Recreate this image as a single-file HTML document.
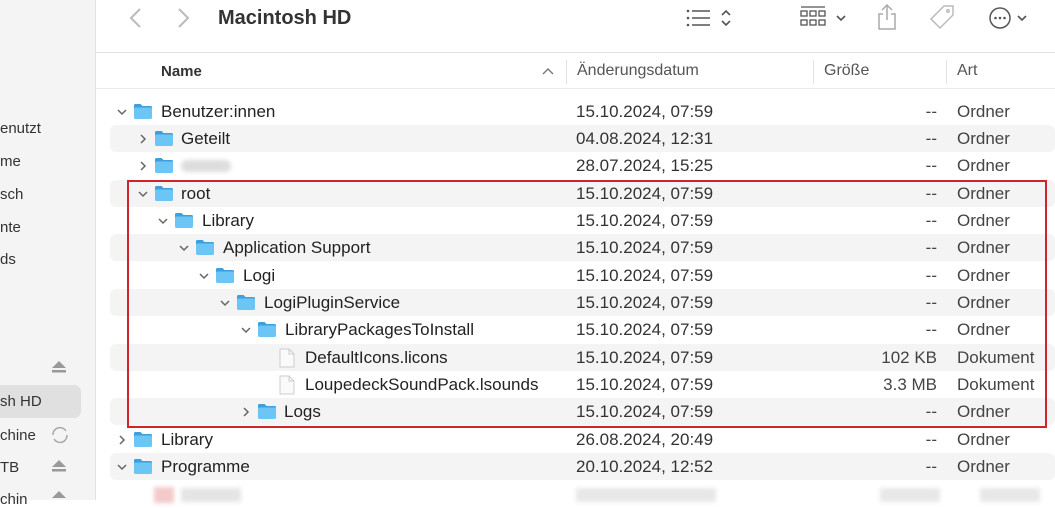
<!DOCTYPE html>
<html><head><meta charset="utf-8"><style>
*{margin:0;padding:0;box-sizing:border-box}
body{width:1055px;height:500px;overflow:hidden;background:#fff;font-family:"Liberation Sans",sans-serif;position:relative;color:#222}
.sb{position:absolute;left:0;top:0;width:96px;height:500px;background:#f4f4f4;border-right:1px solid #e2e2e2}
.sbt{position:absolute;font-size:15px;color:#333}
.a{position:absolute}
.row{position:absolute;left:110px;width:945px;height:27px;font-size:17px}
.st{background:#f4f4f4;border-radius:6px}
.row span{position:absolute;top:4px;white-space:nowrap}
.dt{left:466px;color:#333}
.row span.sz{right:118px;color:#444}
.kd{left:847px;color:#444}
.ch{position:absolute;top:8px}
.fo{position:absolute;top:5px}
.hd{position:absolute;top:62px;font-size:16px;color:#555}
</style></head><body>
<div class="sb">
<div class="sbt" style="left:0;top:120px">enutzt</div>
<div class="sbt" style="left:0;top:153px">me</div>
<div class="sbt" style="left:0;top:186px">sch</div>
<div class="sbt" style="left:0;top:219px">nte</div>
<div class="sbt" style="left:0;top:251px">ds</div>
<svg class="a" style="left:51px;top:360px" width="16" height="14"><path d="M8 1 L15 8 H1 Z" fill="#999"/><rect x="1" y="10" width="14" height="2.5" fill="#999"/></svg>
<div class="a" style="left:0;top:385px;width:81px;height:33px;background:#e0e0e0;border-radius:0 7px 7px 0"></div>
<div class="sbt" style="left:0;top:393px">sh HD</div>
<div class="sbt" style="left:0;top:427px">chine</div>
<svg class="a" style="left:50px;top:425px" width="20" height="20"><path d="M3 10 A7 7 0 0 1 16 6 M17 10 A7 7 0 0 1 4 14" stroke="#aaa" stroke-width="1.5" fill="none"/></svg>
<div class="sbt" style="left:0;top:459px">TB</div>
<svg class="a" style="left:51px;top:459px" width="16" height="14"><path d="M8 1 L15 8 H1 Z" fill="#999"/><rect x="1" y="10" width="14" height="2.5" fill="#999"/></svg>
<div class="sbt" style="left:0;top:491px">chin</div>
<svg class="a" style="left:51px;top:490px" width="16" height="14"><path d="M8 1 L15 8 H1 Z" fill="#999"/></svg>
</div>
<svg class="a" style="left:128px;top:7px" width="14" height="22"><path d="M12 2 L3 11 L12 20" stroke="#bbb" stroke-width="2" fill="none"/></svg>
<svg class="a" style="left:177px;top:7px" width="14" height="22"><path d="M2 2 L11 11 L2 20" stroke="#bbb" stroke-width="2" fill="none"/></svg>
<div class="a" style="left:218px;top:7px;font-size:20px;font-weight:bold;color:#333">Macintosh HD</div>
<svg class="a" style="left:686px;top:8px" width="50" height="20"><g fill="#555"><circle cx="2" cy="3" r="1.3"/><circle cx="2" cy="10" r="1.3"/><circle cx="2" cy="17" r="1.3"/></g><g stroke="#555" stroke-width="1.6"><path d="M6 3H24M6 10H24M6 17H24"/><path d="M36 7l4-4 4 4M36 13l4 4 4-4" fill="none"/></g></svg>
<svg class="a" style="left:800px;top:6px" width="50" height="24"><g stroke="#555" stroke-width="1.3" fill="none"><path d="M1 1H25"/><rect x="1" y="5" width="6" height="5"/><rect x="10" y="5" width="6" height="5"/><rect x="19" y="5" width="6" height="5"/><rect x="1" y="14" width="6" height="5"/><rect x="10" y="14" width="6" height="5"/><rect x="19" y="14" width="6" height="5"/><path d="M37 10l4 4 4-4" stroke-width="1.6"/></g></svg>
<svg class="a" style="left:876px;top:3px" width="22" height="28"><g stroke="#aaa" stroke-width="1.5" fill="none"><path d="M11 2V17M6 7l5-5 5 5M7 11H3V26H19V11H15"/></g></svg>
<svg class="a" style="left:928px;top:4px" width="28" height="28"><g stroke="#bbb" stroke-width="1.5" fill="none"><path d="M16 2H25V11L12 24 3 15Z"/><circle cx="20" cy="7" r="1.2"/></g></svg>
<svg class="a" style="left:988px;top:6px" width="50" height="24"><circle cx="12" cy="12" r="10" stroke="#555" stroke-width="1.5" fill="none"/><g fill="#555"><circle cx="7.5" cy="12" r="1.3"/><circle cx="12" cy="12" r="1.3"/><circle cx="16.5" cy="12" r="1.3"/></g><path d="M30 10l4 4 4-4" stroke="#555" stroke-width="1.6" fill="none"/></svg>
<div class="a" style="left:96px;top:52px;width:959px;height:1px;background:#e2e2e2"></div>
<div class="hd" style="left:161px;font-weight:bold;color:#333;font-size:15px;top:63px">Name</div>
<svg class="a" style="left:542px;top:67px" width="12" height="8"><path d="M1 7l5-5 5 5" stroke="#777" stroke-width="1.4" fill="none"/></svg>
<div class="a" style="left:566px;top:60px;width:1px;height:24px;background:#e2e2e2"></div>
<div class="hd" style="left:577px">Änderungsdatum</div>
<div class="a" style="left:813px;top:60px;width:1px;height:24px;background:#e2e2e2"></div>
<div class="hd" style="left:824px">Größe</div>
<div class="a" style="left:946px;top:60px;width:1px;height:24px;background:#e2e2e2"></div>
<div class="hd" style="left:957px">Art</div>
<div class="a" style="left:96px;top:88px;width:959px;height:1px;background:#ececec"></div>

<svg width="0" height="0" style="position:absolute"><defs>
<symbol id="f" viewBox="0 0 20 17"><path d="M1 2.5Q1 1 2.5 1H7.5L9.5 3H17.5Q19 3 19 4.5V6H1Z" fill="#3d9fdc"/><rect x="1" y="4.5" width="18" height="11.5" rx="1.5" fill="#6cc6f5"/></symbol>
<symbol id="d" viewBox="0 0 12 12"><path d="M2 4l4 4 4-4" stroke="#666" stroke-width="1.5" fill="none"/></symbol>
<symbol id="r" viewBox="0 0 12 12"><path d="M4 2l4 4-4 4" stroke="#666" stroke-width="1.5" fill="none"/></symbol>
<symbol id="p" viewBox="0 0 16 20"><path d="M1 1H10L15 6V19H1Z" fill="#fafafa" stroke="#ccc"/><path d="M10 1V6H15" fill="none" stroke="#ccc"/></symbol>
</defs></svg>

<div class="row" style="top:98px"><svg class="ch" style="left:6px" width="12" height="12"><use href="#d"/></svg><svg class="fo" style="left:23px" width="20" height="17"><use href="#f"/></svg><span style="left:51px">Benutzer:innen</span><span class="dt">15.10.2024, 07:59</span><span class="sz">--</span><span class="kd">Ordner</span></div>
<div class="row st" style="top:125px"><svg class="ch" style="left:27px" width="12" height="12"><use href="#r"/></svg><svg class="fo" style="left:44px" width="20" height="17"><use href="#f"/></svg><span style="left:71px">Geteilt</span><span class="dt">04.08.2024, 12:31</span><span class="sz">--</span><span class="kd">Ordner</span></div>
<div class="row" style="top:152px"><svg class="ch" style="left:27px" width="12" height="12"><use href="#r"/></svg><svg class="fo" style="left:44px" width="20" height="17"><use href="#f"/></svg><div class="a" style="left:71px;top:8px;width:50px;height:12px;background:#ddd;border-radius:6px;filter:blur(2px)"></div><span class="dt">28.07.2024, 15:25</span><span class="sz">--</span><span class="kd">Ordner</span></div>
<div class="row st" style="top:180px"><svg class="ch" style="left:27px" width="12" height="12"><use href="#d"/></svg><svg class="fo" style="left:44px" width="20" height="17"><use href="#f"/></svg><span style="left:71px">root</span><span class="dt">15.10.2024, 07:59</span><span class="sz">--</span><span class="kd">Ordner</span></div>
<div class="row" style="top:207px"><svg class="ch" style="left:47px" width="12" height="12"><use href="#d"/></svg><svg class="fo" style="left:64px" width="20" height="17"><use href="#f"/></svg><span style="left:92px">Library</span><span class="dt">15.10.2024, 07:59</span><span class="sz">--</span><span class="kd">Ordner</span></div>
<div class="row st" style="top:234px"><svg class="ch" style="left:68px" width="12" height="12"><use href="#d"/></svg><svg class="fo" style="left:85px" width="20" height="17"><use href="#f"/></svg><span style="left:113px">Application Support</span><span class="dt">15.10.2024, 07:59</span><span class="sz">--</span><span class="kd">Ordner</span></div>
<div class="row" style="top:262px"><svg class="ch" style="left:88px" width="12" height="12"><use href="#d"/></svg><svg class="fo" style="left:105px" width="20" height="17"><use href="#f"/></svg><span style="left:133px">Logi</span><span class="dt">15.10.2024, 07:59</span><span class="sz">--</span><span class="kd">Ordner</span></div>
<div class="row st" style="top:289px"><svg class="ch" style="left:109px" width="12" height="12"><use href="#d"/></svg><svg class="fo" style="left:126px" width="20" height="17"><use href="#f"/></svg><span style="left:154px">LogiPluginService</span><span class="dt">15.10.2024, 07:59</span><span class="sz">--</span><span class="kd">Ordner</span></div>
<div class="row" style="top:316px"><svg class="ch" style="left:130px" width="12" height="12"><use href="#d"/></svg><svg class="fo" style="left:147px" width="20" height="17"><use href="#f"/></svg><span style="left:175px">LibraryPackagesToInstall</span><span class="dt">15.10.2024, 07:59</span><span class="sz">--</span><span class="kd">Ordner</span></div>
<div class="row st" style="top:344px"><svg class="fo" style="left:169px;top:4px" width="16" height="20"><use href="#p"/></svg><span style="left:195px">DefaultIcons.licons</span><span class="dt">15.10.2024, 07:59</span><span class="sz">102 KB</span><span class="kd">Dokument</span></div>
<div class="row" style="top:371px"><svg class="fo" style="left:169px;top:4px" width="16" height="20"><use href="#p"/></svg><span style="left:195px">LoupedeckSoundPack.lsounds</span><span class="dt">15.10.2024, 07:59</span><span class="sz">3.3 MB</span><span class="kd">Dokument</span></div>
<div class="row st" style="top:398px"><svg class="ch" style="left:130px" width="12" height="12"><use href="#r"/></svg><svg class="fo" style="left:147px" width="20" height="17"><use href="#f"/></svg><span style="left:174px">Logs</span><span class="dt">15.10.2024, 07:59</span><span class="sz">--</span><span class="kd">Ordner</span></div>
<div class="row" style="top:426px"><svg class="ch" style="left:6px" width="12" height="12"><use href="#r"/></svg><svg class="fo" style="left:23px" width="20" height="17"><use href="#f"/></svg><span style="left:51px">Library</span><span class="dt">26.08.2024, 20:49</span><span class="sz">--</span><span class="kd">Ordner</span></div>
<div class="row st" style="top:453px"><svg class="ch" style="left:6px" width="12" height="12"><use href="#d"/></svg><svg class="fo" style="left:23px" width="20" height="17"><use href="#f"/></svg><span style="left:51px">Programme</span><span class="dt">20.10.2024, 12:52</span><span class="sz">--</span><span class="kd">Ordner</span></div>
<div class="row" style="top:481px"><div class="a" style="left:44px;top:6px;width:20px;height:16px;background:#f3c9c9;filter:blur(2px)"></div><div class="a" style="left:71px;top:7px;width:60px;height:14px;background:#e5e5e5;filter:blur(2px)"></div><div class="a" style="left:466px;top:7px;width:140px;height:14px;background:#e8e8e8;filter:blur(2px)"></div><div class="a" style="left:870px;top:7px;width:60px;height:14px;background:#e8e8e8;filter:blur(2px)"></div><div class="a" style="left:770px;top:7px;width:60px;height:14px;background:#e8e8e8;filter:blur(2px)"></div></div>

<div class="a" style="left:127px;top:180px;width:920px;height:248px;border:2px solid #d0232a"></div>
</body></html>
